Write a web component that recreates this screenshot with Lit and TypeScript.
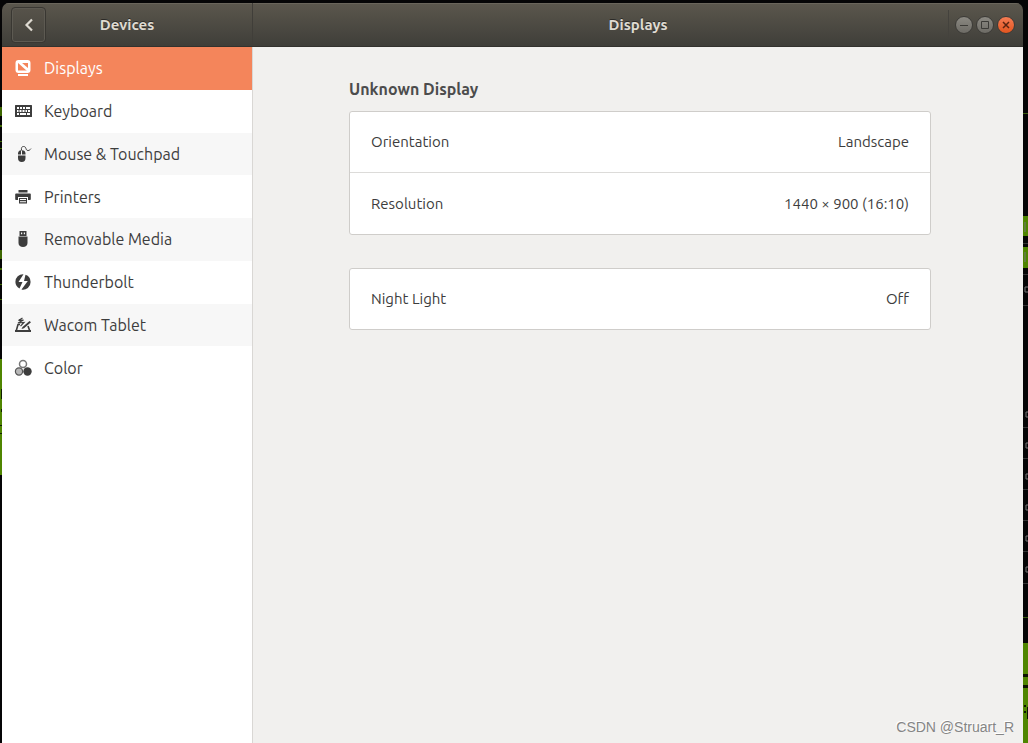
import { LitElement, html, css, svg } from "lit";
import { customElement, state } from "lit/decorators.js";
import { classMap } from "lit/directives/class-map.js";

const icons = {
  displays: svg`<path fill-rule="evenodd" d="M3.500 0h9A3 3 0 0 1 15.500 3v7a3 3 0 0 1-3 3h-9a3 3 0 0 1-3-3V3a3 3 0 0 1 3-3zM3 3v7.500h10V3z"/><path d="M2.500 2.500h4L13.500 8.500V11H12z"/><rect x="3" y="14" width="10" height="2"/>`,
  keyboard: svg`<path fill-rule="evenodd" d="M.6 2h15.800a.6.6 0 0 1 .6.600v10.800a.6.600 0 0 1-.6.600H.6a.6.600 0 0 1-.6-.6V2.600A.6.600 0 0 1 .6 2zM2 4v2h2V4zm3 0v2h2V4zm3 0v2h2V4zm3 0v2h4V4zM2 7v2h1.500V7zm2.500 0v2h2V7zm3 0v2h2V7zm3 0v2H12V7zm2.500 0v2h2V7zM2 10v2h2v-2zm3 0v2h6v-2zm7 0v2h3v-2z"/>`,
  mouse: svg`<path d="M3 8.500V7.500a3.500 3.500 0 0 1 3-3.300v4.300zm4-4.300a3.500 3.500 0 0 1 3.500 3.300v1H7zM3 9.500h7.500V12a3.750 4 0 0 1-7.500 0z"/><path fill="none" stroke="currentColor" d="M6.500 4.500C6 1.500 7 .5 8.500.5c3.500 0 1.500 4 4.500 4 1.500 0 2-.8 3-1.800"/>`,
  printer: svg`<path d="M3.500 1h9v2.500h-9zM1 4.500h14a.8.800 0 0 1 .8.800v5a.8.800 0 0 1-.8.700h-2V8H3v3H1a.8.800 0 0 1-.8-.8v-5A.8.800 0 0 1 1 4.500z"/><path fill-rule="evenodd" d="M4 9h8v5.500H4zm1 1v1h6v-1zm0 2.200v1h6v-1z"/>`,
  usb: svg`<path fill-rule="evenodd" d="M4.500 0h7v5h-7zM6 1.500v1.700h1.200V1.500zm2.800 0v1.700H10V1.500z"/><path d="M3.500 5.500h9V12c0 2.500-2 4-4.500 4s-4.500-1.500-4.500-4z"/>`,
  thunderbolt: svg`<path d="M8.500.2 3.500 8h4L4.500 14.500A7.600 7.600 0 0 1 .4 8 7.600 7.600 0 0 1 8.500.2zM10.500.8A7.600 7.600 0 0 1 15.600 8 7.600 7.600 0 0 1 6.500 15.600L12.800 7H9z"/>`,
  tablet: svg`<path fill="none" stroke="currentColor" stroke-width="1.600" d="M5 7.500H3L1.200 14h13.600L13 9"/><path d="M0 13h16v2H0zM14.500 4 16 5.300 9 11.200l-2.500.7L7.500 10z"/><path fill="none" stroke="currentColor" stroke-width="1.200" d="M7.500 1 3.500 3.500 8.500 3 3 6l6-.6-3.500 3.800"/>`,
  color: svg`<circle cx="8" cy="4" r="3.500" fill="#fff" stroke="#777" stroke-width="1.500"/><circle cx="4" cy="11.500" r="3.600" fill="#b8b8b8" stroke="#555" stroke-width="1.200"/><circle cx="12.500" cy="11.500" r="4.200" fill="#3c3c3c"/>`,
};

const panels = [
  { name: "Displays", icon: icons.displays },
  { name: "Keyboard", icon: icons.keyboard },
  { name: "Mouse & Touchpad", icon: icons.mouse },
  { name: "Printers", icon: icons.printer },
  { name: "Removable Media", icon: icons.usb },
  { name: "Thunderbolt", icon: icons.thunderbolt },
  { name: "Wacom Tablet", icon: icons.tablet },
  { name: "Color", icon: icons.color },
];

const groups = [
  {
    title: "Unknown Display",
    rows: [
      ["Orientation", "Landscape"],
      ["Resolution", "1440 × 900 (16:10)"],
    ],
  },
  { title: "", rows: [["Night Light", "Off"]] },
];

@customElement("app-root")
export class AppRoot extends LitElement {
  @state() private selected = "Displays";

  static styles = css`
    :host {
      display: block;
      min-height: 100vh;
      font: 15px/20px Ubuntu, "Noto Sans", sans-serif;
      color: #3d3d3d;
    }
    * { box-sizing: border-box; }
    button { font: inherit; color: inherit; border: 0; margin: 0; padding: 0; cursor: default; }
    svg { display: block; fill: currentColor; overflow: visible; }
    .desktop {
      display: grid;
      grid-template-columns: 2px minmax(0, 1fr) 5px;
      min-height: 100vh;
      padding-top: 3px;
      background: #050506;
    }
    .edge { width: 100%; height: 740px; overflow: hidden; }
    .window { display: flex; flex-direction: column; border-radius: 7px 7px 0 0; overflow: hidden; }
    .header {
      display: grid;
      grid-template-columns: 251px minmax(0, 1fr);
      height: 44px;
      color: #dfdbd2;
      background: linear-gradient(#5b574d, #3f3e39);
      border-bottom: 1px solid #33322e;
      box-shadow: inset 0 1px #69655b;
      text-shadow: 0 -1px #2b2a27;
    }
    .side-title { display: grid; grid-template-columns: 36px 1fr 36px; align-items: center; padding: 0 9px; border-right: 1px solid #403e39; }
    .main-title { display: grid; grid-template-columns: 75px 1fr 75px; align-items: center; }
    h1, h2 { margin: 0; font-size: 16px; line-height: 20px; font-weight: 700; }
    h1 { font-size: 15px; text-align: center; }
    .back {
      display: grid; place-items: center; width: 35px; height: 36px;
      border: 1px solid #393732; border-radius: 4px;
      background: linear-gradient(#57534a, #45433d);
      box-shadow: inset 0 0 0 1px #5d5a52;
    }
    .controls { grid-column: 3; display: flex; gap: 3px; align-items: center; justify-content: flex-end; padding-right: 8px; height: 30px; border-left: 1px solid #44423d; }
    .control { display: grid; place-items: center; width: 18px; height: 18px; border-radius: 50%; border: 1px solid #3c3b37; background: linear-gradient(#8b8982, #6d6b65); color: #3c3b37; }
    .close { background: linear-gradient(#f47c54, #e2551f); color: #5a2411; }
    .body { flex: 1; display: grid; grid-template-columns: 251px minmax(0, 1fr); }
    .sidebar { background: #fff; border-right: 1px solid #d9d7d4; }
    .list { display: grid; grid-auto-rows: 1fr; height: 342px; list-style: none; margin: 0; padding: 0; }
    .item { display: grid; }
    .item:nth-child(odd) { background: #f7f7f7; }
    .entry { display: flex; align-items: center; gap: 13px; width: 100%; padding: 0 13px; font-size: 16px; text-align: left; background: none; }
    .selected .entry { background: #f4855b; color: #fff; }
    .content { background: #f1f0ee; padding: 32px 92px 32px 96px; }
    .group { margin-bottom: 33px; }
    .group h2 { margin-bottom: 12px; color: #4c4c4c; }
    .card { background: #fff; border: 1px solid #cfcdca; border-radius: 3px; overflow: hidden; }
    .row { display: flex; justify-content: space-between; align-items: center; width: 100%; height: 60px; padding: 0 21px; background: none; }
    .row + .row { border-top: 1px solid #dcdbd9; height: 62px; }
    .watermark { position: absolute; right: 14px; bottom: 6px; font: 14px/20px "Liberation Sans", sans-serif; color: #858585; text-shadow: -1px -1px #fff; }
  `;

  private leftEdge() {
    return html`<svg class="edge" viewBox="0 0 2 740" preserveAspectRatio="none" aria-hidden="true">
      <path fill="#3c6600" d="M0 104h2v9H0zM0 122h2v2H0zM0 138h2v1H0zM0 145h2v1H0zM0 247h2v9H0zM0 265h2v2H0zM0 281h2v1H0zM0 296h2v1H0z"/>
      <path fill="#4f8500" d="M0 356h2v116H0z"/>
      <path fill="#102000" d="M1 386h1v10H1zM1 406h1v3H1zM0 422h2v1H0zM0 430h2v1H0z"/>
    </svg>`;
  }

  private rightEdge() {
    return html`<svg class="edge" viewBox="0 0 5 740" preserveAspectRatio="none" aria-hidden="true">
      <path fill="#4f8500" d="M0 213h5v20H0zM0 244h5v21H0zM0 640h5v100H0z"/>
      <path fill="#3a5a10" d="M0 110h5v1H0zM0 614h5v1H0z"/>
      <path fill="#333" d="M0 240h5v1H0zM0 271h5v1H0zM0 302h5v1H0zM0 424h5v1H0zM0 455h5v1H0zM0 486h5v1H0zM0 517h5v1H0zM0 548h5v1H0zM0 580h5v1H0z"/>
      <path fill="#0b1200" d="M0 671h5v3H0zM0 682h5v3H0zM1 702h2v2H1zM1 708h2v2H1zM4 704h1v12H4z"/>
      <path fill="none" stroke="#777" d="M5 284H2v5h3M5 409H3v5h2M5 440H3v5h2M5 471H3v5h2M5 502H3v5h2M5 533H3v5h2M5 564H3v5h2M2 219v10M2 249v10"/>
    </svg>`;
  }

  render() {
    return html`
      <div class="desktop">
        ${this.leftEdge()}
        <div class="window">
          <header class="header">
            <div class="side-title">
              <button class="back" aria-label="Back">
                <svg width="16" height="16" viewBox="0 0 16 16"><path d="M11 2.500 5.500 8l5.500 5.500" fill="none" stroke="currentColor" stroke-width="2.200"/></svg>
              </button>
              <h1>Devices</h1>
            </div>
            <div class="main-title">
              <span></span>
              <h1>${this.selected}</h1>
              <div class="controls">
                <button class="control" aria-label="Minimize"><svg width="10" height="10"><path d="M1 5h8v1H1z"/></svg></button>
                <button class="control" aria-label="Maximize"><svg width="10" height="10"><path d="M1.500 1.500h7v7h-7z" fill="none" stroke="currentColor"/></svg></button>
                <button class="control close" aria-label="Close"><svg width="10" height="10"><path d="m2 2 6 6M8 2 2 8" stroke="currentColor" stroke-width="1.500"/></svg></button>
              </div>
            </div>
          </header>
          <div class="body">
            <nav class="sidebar">
              <ul class="list">
                ${panels.map(
                  (p) => html`<li class=${classMap({ item: true, selected: p.name === this.selected })}>
                    <button class="entry" @click=${() => (this.selected = p.name)}>
                      <svg width="16" height="16" viewBox="0 0 16 16" aria-hidden="true">${p.icon}</svg>
                      <span>${p.name}</span>
                    </button>
                  </li>`
                )}
              </ul>
            </nav>
            <main class="content">
              ${groups.map(
                (g) => html`<section class="group">
                  ${g.title ? html`<h2>${g.title}</h2>` : ""}
                  <div class="card">
                    ${g.rows.map(([label, value]) => html`<button class="row"><span>${label}</span><span>${value}</span></button>`)}
                  </div>
                </section>`
              )}
            </main>
          </div>
        </div>
        ${this.rightEdge()}
      </div>
      <div class="watermark">CSDN @Struart_R</div>
    `;
  }
}
